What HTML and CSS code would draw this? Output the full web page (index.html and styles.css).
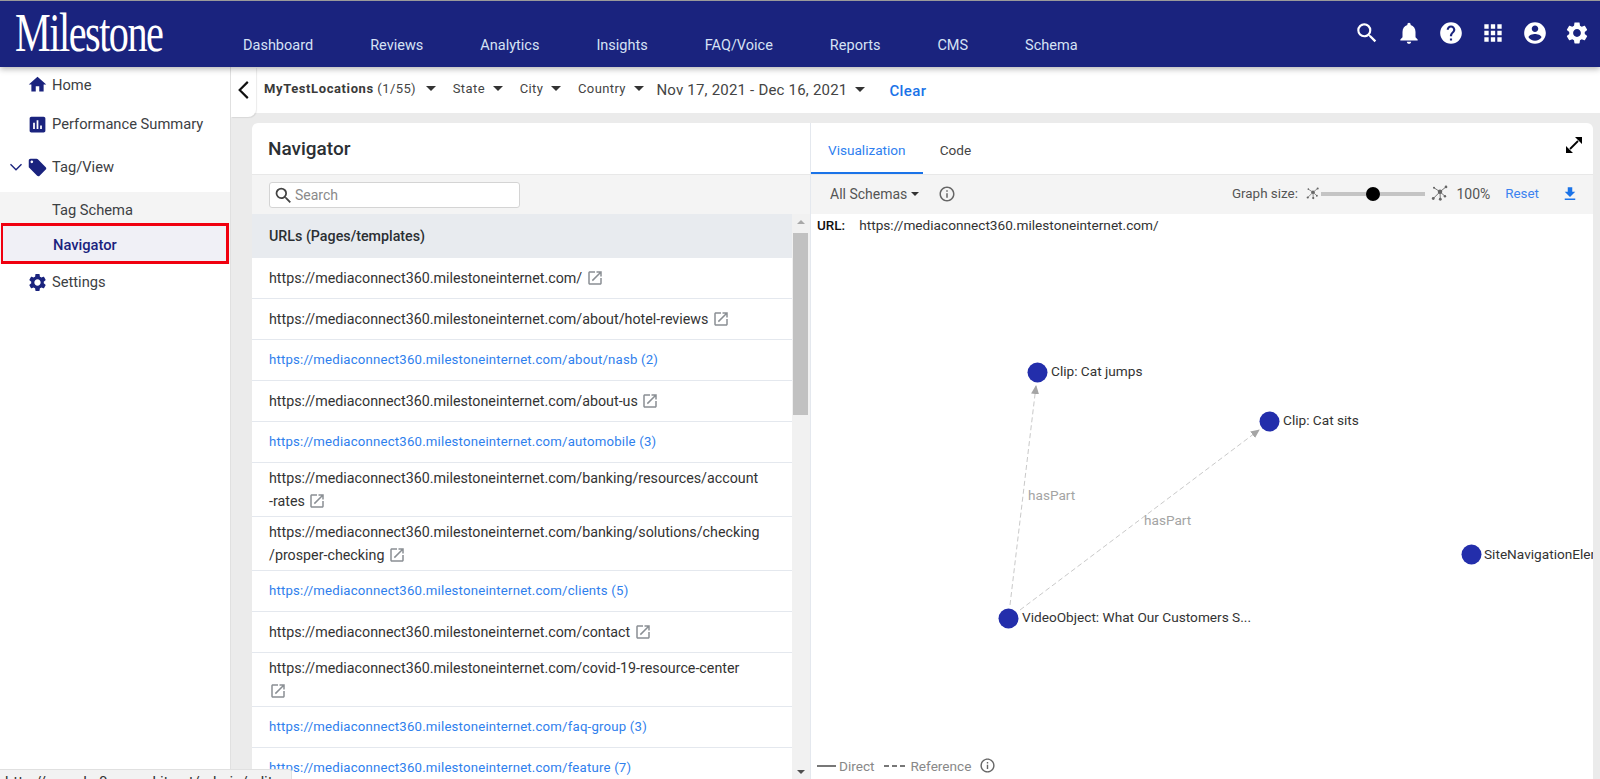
FILE: index.html

```html
<!DOCTYPE html>
<html lang="en">
<head>
  <meta charset="UTF-8">
  <title>Milestone - Navigator</title>
  <meta name="viewport" content="width=device-width, initial-scale=1.0">
  <link rel="stylesheet" href="styles.css">
</head>
<body>

<svg class="sprite" width="0" height="0">
  <symbol id="i-search" viewBox="0 0 24 24"><path d="M15.5 14h-.79l-.28-.27A6.471 6.471 0 0 0 16 9.5 6.5 6.5 0 1 0 9.5 16c1.61 0 3.09-.59 4.23-1.57l.27.28v.79l5 4.99L20.49 19l-4.99-5zm-6 0C7.01 14 5 11.99 5 9.5S7.01 5 9.5 5 14 7.01 14 9.5 11.99 14 9.5 14z"/></symbol>
  <symbol id="i-bell" viewBox="0 0 24 24"><path d="M12 22c1.1 0 2-.9 2-2h-4c0 1.1.9 2 2 2zm6-6v-5c0-3.07-1.63-5.64-4.5-6.32V4c0-.83-.67-1.5-1.5-1.5s-1.5.67-1.5 1.5v.68C7.64 5.36 6 7.92 6 11v5l-2 2v1h16v-1l-2-2z"/></symbol>
  <symbol id="i-help" viewBox="0 0 24 24"><path d="M12 2C6.48 2 2 6.48 2 12s4.48 10 10 10 10-4.48 10-10S17.52 2 12 2zm1 17h-2v-2h2v2zm2.07-7.75l-.9.92C13.45 12.9 13 13.5 13 15h-2v-.5c0-1.1.45-2.1 1.17-2.83l1.24-1.26c.37-.36.59-.86.59-1.41 0-1.1-.9-2-2-2s-2 .9-2 2H8c0-2.21 1.79-4 4-4s4 1.79 4 4c0 .88-.36 1.68-.93 2.25z"/></symbol>
  <symbol id="i-apps" viewBox="0 0 24 24"><path d="M4 8h4V4H4v4zm6 12h4v-4h-4v4zm-6 0h4v-4H4v4zm0-6h4v-4H4v4zm6 0h4v-4h-4v4zm6-10v4h4V4h-4zm-6 4h4V4h-4v4zm6 6h4v-4h-4v4zm0 6h4v-4h-4v4z"/></symbol>
  <symbol id="i-account" viewBox="0 0 24 24"><path d="M12 2C6.48 2 2 6.48 2 12s4.48 10 10 10 10-4.48 10-10S17.52 2 12 2zm0 3c1.66 0 3 1.34 3 3s-1.34 3-3 3-3-1.34-3-3 1.34-3 3-3zm0 14.2c-2.5 0-4.71-1.28-6-3.22.03-1.99 4-3.08 6-3.08 1.99 0 5.97 1.09 6 3.08-1.29 1.94-3.5 3.22-6 3.22z"/></symbol>
  <symbol id="i-gear" viewBox="0 0 24 24"><path d="M19.14 12.94c.04-.3.06-.61.06-.94 0-.32-.02-.64-.07-.94l2.03-1.58c.18-.14.23-.41.12-.61l-1.92-3.32c-.12-.22-.37-.29-.59-.22l-2.39.96c-.5-.38-1.03-.7-1.62-.94l-.36-2.54c-.04-.24-.24-.41-.48-.41h-3.84c-.24 0-.43.17-.47.41l-.36 2.54c-.59.24-1.13.57-1.62.94l-2.39-.96c-.22-.08-.47 0-.59.22L2.74 8.87c-.12.21-.08.47.12.61l2.03 1.58c-.05.3-.09.63-.09.94s.02.64.07.94l-2.03 1.58c-.18.14-.23.41-.12.61l1.92 3.32c.12.22.37.29.59.22l2.39-.96c.5.38 1.03.7 1.62.94l.36 2.54c.05.24.24.41.48.41h3.84c.24 0 .44-.17.47-.41l.36-2.54c.59-.24 1.13-.56 1.62-.94l2.39.96c.22.08.47 0 .59-.22l1.92-3.32c.12-.22.07-.47-.12-.61l-2.01-1.58zM12 15.6c-1.98 0-3.6-1.62-3.6-3.6s1.62-3.6 3.6-3.6 3.6 1.62 3.6 3.6-1.62 3.6-3.6 3.6z"/></symbol>
  <symbol id="i-home" viewBox="0 0 24 24"><path d="M10 20v-6h4v6h5v-8h3L12 3 2 12h3v8z"/></symbol>
  <symbol id="i-chart" viewBox="0 0 24 24"><path d="M19 3H5c-1.1 0-2 .9-2 2v14c0 1.1.9 2 2 2h14c1.1 0 2-.9 2-2V5c0-1.1-.9-2-2-2zM9 17H7v-7h2v7zm4 0h-2V7h2v10zm4 0h-2v-4h2v4z"/></symbol>
  <symbol id="i-tag" viewBox="0 0 24 24"><path d="M21.41 11.58l-9-9C12.05 2.22 11.55 2 11 2H4c-1.1 0-2 .9-2 2v7c0 .55.22 1.05.59 1.42l9 9c.36.36.86.58 1.41.58.55 0 1.05-.22 1.41-.59l7-7c.37-.36.59-.86.59-1.41 0-.55-.23-1.06-.59-1.42zM5.5 7C4.67 7 4 6.33 4 5.5S4.67 4 5.5 4 7 4.67 7 5.5 6.33 7 5.5 7z"/></symbol>
  <symbol id="i-open" viewBox="0 0 24 24"><path d="M19 19H5V5h7V3H5c-1.11 0-2 .9-2 2v14c0 1.1.89 2 2 2h14c1.1 0 2-.9 2-2v-7h-2v7zM14 3v2h3.59l-9.83 9.83 1.41 1.41L19 6.41V10h2V3h-7z"/></symbol>
  <symbol id="i-info" viewBox="0 0 24 24"><path d="M11 7h2v2h-2zm0 4h2v6h-2zm1-9C6.48 2 2 6.48 2 12s4.48 10 10 10 10-4.48 10-10S17.52 2 12 2zm0 18c-4.41 0-8-3.59-8-8s3.59-8 8-8 8 3.59 8 8-3.59 8-8 8z"/></symbol>
  <symbol id="i-download" viewBox="0 0 24 24"><path d="M19 9h-4V3H9v6H5l7 7 7-7zM5 18v2h14v-2H5z"/></symbol>
  <symbol id="i-back" viewBox="0 0 24 24"><path d="M15.5 4.5L8 12l7.5 7.5" fill="none" stroke="currentColor" stroke-width="2"/></symbol>
  <symbol id="i-down" viewBox="0 0 24 24"><path d="M6 9l6 6 6-6" fill="none" stroke="currentColor" stroke-width="1.5"/></symbol>
  <symbol id="i-expand" viewBox="0 0 16 16"><path d="M9 0h7v7zM0 16V9l7 7z"/><path d="M4 12l8-8" fill="none" stroke="currentColor" stroke-width="1.8"/></symbol>
  <symbol id="i-graph" viewBox="0 0 24 24"><path d="M12 9L20 2.5M12 9L4 3.7M12 9L3 18M12 9L12.4 19M12 9L18.6 15" fill="none" stroke="currentColor" stroke-width="1.2"/><circle cx="12" cy="9" r="3"/><circle cx="20" cy="2.5" r="1.8"/><circle cx="4" cy="3.7" r="1.4"/><circle cx="3" cy="18" r="1.9"/><circle cx="12.4" cy="19" r="1.9"/><circle cx="18.6" cy="15" r="1.6"/></symbol>
</svg>

<header class="topbar">
  <div class="logo">Milestone</div>
  <nav class="mainnav">
    <a>Dashboard</a>
    <a>Reviews</a>
    <a>Analytics</a>
    <a>Insights</a>
    <a>FAQ/Voice</a>
    <a>Reports</a>
    <a>CMS</a>
    <a>Schema</a>
  </nav>
  <div class="topicons">
    <svg class="ico"><use href="#i-search"/></svg>
    <svg class="ico"><use href="#i-bell"/></svg>
    <svg class="ico"><use href="#i-help"/></svg>
    <svg class="ico"><use href="#i-apps"/></svg>
    <svg class="ico"><use href="#i-account"/></svg>
    <svg class="ico"><use href="#i-gear"/></svg>
  </div>
</header>

<div class="layout">
  <aside class="sidebar">
    <a class="side-item item-home"><svg class="ico-side"><use href="#i-home"/></svg>Home</a>
    <a class="side-item item-perf"><svg class="ico-side"><use href="#i-chart"/></svg>Performance Summary</a>
    <a class="side-item item-tag">
      <svg class="ico-caret"><use href="#i-down"/></svg>
      <svg class="ico-side"><use href="#i-tag"/></svg>Tag/View
    </a>
    <div class="submenu">
      <a class="sub-item">Tag Schema</a>
      <a class="sub-item active">Navigator</a>
    </div>
    <a class="side-item item-settings"><svg class="ico-side"><use href="#i-gear"/></svg>Settings</a>
  </aside>

  <main class="content">
    <div class="filterbar">
      <button class="backbtn"><svg class="ico-back"><use href="#i-back"/></svg></button>
      <span class="filter"><b>MyTestLocations</b> (1/55)<i class="caret"></i></span>
      <span class="filter">State<i class="caret"></i></span>
      <span class="filter">City<i class="caret"></i></span>
      <span class="filter last">Country<i class="caret"></i></span>
      <span class="filter date">Nov 17, 2021 - Dec 16, 2021<i class="caret"></i></span>
      <a class="clear">Clear</a>
    </div>

    <div class="panel">
      <section class="leftpane">
        <h2 class="pane-title">Navigator</h2>
        <div class="searchrow">
          <div class="searchbox">
            <svg class="ico-search"><use href="#i-search"/></svg>
            <span>Search</span>
          </div>
        </div>
        <div class="listwrap">
          <div class="urllist">
            <div class="list-head">URLs (Pages/templates)</div>
            <div class="row">https://mediaconnect360.milestoneinternet.com/ <svg class="ico-open"><use href="#i-open"/></svg></div>
            <div class="row">https://mediaconnect360.milestoneinternet.com/about/hotel-reviews <svg class="ico-open"><use href="#i-open"/></svg></div>
            <div class="row link">https://mediaconnect360.milestoneinternet.com/about/nasb (2)</div>
            <div class="row">https://mediaconnect360.milestoneinternet.com/about-us <svg class="ico-open"><use href="#i-open"/></svg></div>
            <div class="row link">https://mediaconnect360.milestoneinternet.com/automobile (3)</div>
            <div class="row tall">https://mediaconnect360.milestoneinternet.com/banking/resources/account<br>-rates <svg class="ico-open"><use href="#i-open"/></svg></div>
            <div class="row tall">https://mediaconnect360.milestoneinternet.com/banking/solutions/checking<br>/prosper-checking <svg class="ico-open"><use href="#i-open"/></svg></div>
            <div class="row link">https://mediaconnect360.milestoneinternet.com/clients (5)</div>
            <div class="row">https://mediaconnect360.milestoneinternet.com/contact <svg class="ico-open"><use href="#i-open"/></svg></div>
            <div class="row tall">https://mediaconnect360.milestoneinternet.com/covid-19-resource-center<br><svg class="ico-open"><use href="#i-open"/></svg></div>
            <div class="row link">https://mediaconnect360.milestoneinternet.com/faq-group (3)</div>
            <div class="row link">https://mediaconnect360.milestoneinternet.com/feature (7)</div>
          </div>
          <div class="scrollbar">
            <i class="arrow-up"></i>
            <div class="thumb"></div>
            <i class="arrow-down"></i>
          </div>
        </div>
      </section>

      <section class="rightpane">
        <div class="tabs">
          <a class="tab active">Visualization</a>
          <a class="tab">Code</a>
          <svg class="ico-expand"><use href="#i-expand"/></svg>
        </div>
        <div class="graphbar">
          <span class="schemas">All Schemas<i class="caret small"></i></span>
          <svg class="ico-info"><use href="#i-info"/></svg>
          <div class="graphsize">
            <span>Graph size:</span>
            <svg class="ico-graph small"><use href="#i-graph"/></svg>
            <div class="slider"><i class="knob"></i></div>
            <svg class="ico-graph"><use href="#i-graph"/></svg>
            <span class="pct">100%</span>
            <a class="reset">Reset</a>
            <svg class="ico-dl"><use href="#i-download"/></svg>
          </div>
        </div>
        <div class="urlline"><b>URL:</b><span>https://mediaconnect360.milestoneinternet.com/</span></div>
        <div class="canvas">
          <svg class="graph" width="798" height="560" viewBox="811 234 798 560">
            <defs>
              <marker id="head" markerWidth="9" markerHeight="8" refX="8" refY="4" orient="auto" markerUnits="userSpaceOnUse">
                <path d="M0 0L9 4L0 8z" fill="#a5a5a5"/>
              </marker>
            </defs>
            <line class="edge" x1="1010" y1="605" x2="1036" y2="386" marker-end="url(#head)"/>
            <line class="edge" x1="1020" y1="610" x2="1259" y2="430" marker-end="url(#head)"/>
            <text class="edge-label" x="1028" y="500">hasPart</text>
            <text class="edge-label" x="1144" y="525">hasPart</text>
            <circle class="node" cx="1037.5" cy="372.5" r="10"/>
            <circle class="node" cx="1269.5" cy="421.5" r="10"/>
            <circle class="node" cx="1008.5" cy="618.5" r="10"/>
            <circle class="node" cx="1471.5" cy="554.5" r="10"/>
            <text class="node-label" x="1051" y="376">Clip: Cat jumps</text>
            <text class="node-label" x="1283" y="425">Clip: Cat sits</text>
            <text class="node-label" x="1022" y="622">VideoObject: What Our Customers S...</text>
            <text class="node-label" x="1484" y="559">SiteNavigationElement</text>
          </svg>
          <div class="legend">
            <i class="solid"></i>Direct
            <i class="dashed"></i>Reference
            <svg class="ico-info"><use href="#i-info"/></svg>
          </div>
        </div>
      </section>
    </div>
  </main>
</div>

<div class="statusbar">http://sample-0.owned.it.net/admin/edit</div>

</body>
</html>
```

FILE: styles.css

```css
* {
  box-sizing: border-box;
}

html, body {
  margin: 0;
  height: 779px;
  overflow: hidden;
}

body {
  font-family: Roboto, 'Liberation Sans', sans-serif;
  color: #333;
  background: #fff;
  display: flex;
  flex-direction: column;
  position: relative;
}

.sprite {
  position: absolute;
}

svg {
  fill: currentColor;
  flex: none;
}

/* top bar */
.topbar {
  height: 67px;
  flex: none;
  background: #1a237e;
  border-top: 1px solid #9a9a9a;
  display: flex;
  box-shadow: 0 2px 6px rgba(0, 0, 0, 0.3);
  position: relative;
  z-index: 3;
}

.logo {
  width: 243px;
  padding: 4px 0 0 15px;
  font-family: 'Liberation Serif', serif;
  font-size: 55px;
  line-height: 56px;
  letter-spacing: -2px;
  color: #fff;
  white-space: nowrap;
  transform: scaleX(0.73);
  transform-origin: 15px 0;
}

.mainnav {
  display: flex;
  gap: 57px;
  padding-top: 36px;
  font-size: 14.5px;
  line-height: 18px;
  color: #d6e2f5;
}

.topicons {
  margin-left: auto;
  display: flex;
  gap: 16px;
  padding: 19px 10px 0 0;
  color: #fff;
}

.ico {
  width: 26px;
  height: 26px;
}

/* layout */
.layout {
  flex: 1;
  display: flex;
  min-height: 0;
}

.sidebar {
  width: 231px;
  flex: none;
  background: #fff;
  border-right: 1px solid #e0e0e0;
  font-size: 14.7px;
  color: #3c4043;
}

.side-item {
  display: flex;
  align-items: center;
  padding-left: 27px;
  gap: 4px;
}

.item-home {
  height: 35px;
}

.item-perf {
  height: 44px;
}

.item-tag {
  height: 46px;
  padding: 0 0 4px 5px;
}

.item-settings {
  height: 36px;
}

.ico-side {
  width: 21px;
  height: 21px;
  color: #1a237e;
}

.ico-caret {
  width: 22px;
  height: 22px;
  color: #1a237e;
  margin-right: -4px;
}

.submenu {
  background: #f4f4f4;
}

.sub-item {
  display: block;
  height: 31px;
  line-height: 37px;
  padding-left: 52px;
}

.sub-item.active {
  height: 41px;
  line-height: 38px;
  margin: 0 1px;
  padding-left: 50px;
  background: #f0f0f6;
  border: 3px solid #f0000f;
  border-left-width: 2px;
  color: #1a237e;
  font-weight: 500;
}

/* filter bar */
.content {
  flex: 1;
  min-width: 0;
  background: #ebebeb;
  display: flex;
  flex-direction: column;
}

.filterbar {
  height: 46px;
  flex: none;
  padding-bottom: 3px;
  background: #fff;
  display: flex;
  align-items: center;
  font-size: 13px;
  letter-spacing: 0.4px;
  color: #444;
  position: relative;
}

.backbtn {
  position: absolute;
  left: 0;
  top: 0;
  width: 25px;
  height: 50px;
  padding: 0 0 4px;
  border: none;
  background: #fff;
  border-radius: 0 0 8px 0;
  box-shadow: 1px 1px 1px rgba(0, 0, 0, 0.08);
  color: #111;
}

.ico-back {
  width: 26px;
  height: 26px;
  display: block;
}

.filter {
  display: flex;
  align-items: center;
  white-space: pre;
  margin-right: 16.7px;
}

.filter.last {
  margin-right: 12.5px;
}

.filterbar .filter:first-of-type {
  margin-left: 33px;
}

.filter b {
  font-weight: 700;
  letter-spacing: 0.6px;
  color: #3a3a3a;
}

.caret {
  display: inline-block;
  width: 0;
  height: 0;
  margin-left: 8px;
  border-left: 5.5px solid transparent;
  border-right: 5.5px solid transparent;
  border-top: 5px solid #333;
}

.filterbar .filter:first-of-type .caret {
  margin-left: 10px;
}

.filter.date {
  margin: 2px 0 0;
  font-size: 15px;
  letter-spacing: 0.2px;
}

.caret.small {
  margin-left: 4px;
  border-width: 4.5px 4.5px 0;
}

.clear {
  margin: 4px 0 0 24px;
  font-size: 15px;
  font-weight: 500;
  color: #1a73e8;
}

/* main panel */
.panel {
  flex: 1;
  min-height: 0;
  margin: 10px 7px 0 21px;
  background: #fff;
  border-radius: 6px 6px 0 0;
  display: flex;
  overflow: hidden;
}

.leftpane {
  width: 559px;
  flex: none;
  display: flex;
  flex-direction: column;
  border-right: 1px solid #e4e8ee;
}

.pane-title {
  height: 51px;
  margin: 0;
  padding-left: 16px;
  font-size: 19px;
  font-weight: 500;
  line-height: 52px;
  color: #2b2f33;
}

.searchrow {
  height: 40px;
  flex: none;
  background: #f4f4f4;
  border-top: 1px solid #e8e8e8;
  padding: 7px 0 0 17px;
}

.searchbox {
  width: 251px;
  height: 26px;
  background: #fff;
  border: 1px solid #d4d4d4;
  border-radius: 3px;
  display: flex;
  align-items: center;
  gap: 1px;
  padding-left: 3px;
  font-size: 14px;
  color: #8a8a8a;
}

.ico-search {
  width: 21px;
  height: 21px;
  color: #444;
}

.listwrap {
  flex: 1;
  min-height: 0;
  display: flex;
}

.urllist {
  flex: 1;
  min-width: 0;
  overflow: hidden;
  font-size: 14.27px;
  color: #333;
}

.list-head {
  height: 44px;
  padding-left: 17px;
  background: #e8ebef;
  line-height: 44px;
  font-weight: 500;
  color: #2b2f33;
}

.row {
  height: 41px;
  padding: 11px 0 0 17px;
  line-height: 17px;
  border-bottom: 1px solid #e4e8ee;
  white-space: nowrap;
}

.row.tall {
  height: 54px;
  padding-top: 4px;
  line-height: 23px;
}

.row.link {
  color: #2f80ed;
  font-size: 13.2px;
  letter-spacing: 0.2px;
}

.ico-open {
  width: 18px;
  height: 18px;
  color: #8a8f94;
  vertical-align: -4px;
}

.scrollbar {
  width: 18px;
  flex: none;
  background: #f1f1f1;
  display: flex;
  flex-direction: column;
  align-items: center;
}

.arrow-up {
  margin-top: 6px;
  width: 0;
  height: 0;
  border-left: 4px solid transparent;
  border-right: 4px solid transparent;
  border-bottom: 4px solid #a8a8a8;
}

.thumb {
  width: 15px;
  height: 182px;
  margin: 9px 2px 0 0;
  background: #c1c1c1;
}

.arrow-down {
  margin-top: auto;
  margin-bottom: 5px;
  width: 0;
  height: 0;
  border-left: 4px solid transparent;
  border-right: 4px solid transparent;
  border-top: 4px solid #505050;
}

/* right pane */
.rightpane {
  flex: 1;
  min-width: 0;
  display: flex;
  flex-direction: column;
}

.tabs {
  height: 51px;
  flex: none;
  display: flex;
  position: relative;
  font-size: 13.6px;
}

.tab {
  height: 51px;
  padding: 0 17px;
  line-height: 54px;
  color: #444;
}

.tab.active {
  color: #2f7ff0;
  border-bottom: 2px solid #1a73e8;
}

.ico-expand {
  position: absolute;
  right: 11px;
  top: 14px;
  width: 16px;
  height: 16px;
  color: #000;
}

.graphbar {
  height: 40px;
  flex: none;
  background: #f4f4f4;
  border-top: 1px solid #e8e8e8;
  display: flex;
  align-items: center;
  font-size: 13.4px;
  color: #555;
  padding: 0 0 2px 19px;
}

.schemas {
  display: flex;
  align-items: center;
  font-size: 14px;
}

.ico-info {
  width: 18px;
  height: 18px;
  color: #666;
  margin-left: 19px;
}

.graphsize {
  margin-left: auto;
  display: flex;
  align-items: center;
  padding-right: 14px;
}

.ico-graph {
  width: 18px;
  height: 18px;
  color: #666;
  margin-left: 6px;
}

.ico-graph.small {
  width: 14px;
  height: 14px;
  margin: 0 1.5px 0 8px;
}

.slider {
  width: 104px;
  height: 4px;
  background: #c4c4c4;
  position: relative;
}

.knob {
  position: absolute;
  left: 45px;
  top: -5px;
  width: 14px;
  height: 14px;
  border-radius: 50%;
  background: #000;
}

.pct {
  margin-left: 7px;
  font-size: 14px;
}

.reset {
  margin-left: 15px;
  color: #3b82f0;
}

.ico-dl {
  width: 18px;
  height: 18px;
  margin-left: 22px;
  color: #1a73e8;
}

.urlline {
  height: 20px;
  flex: none;
  display: flex;
  gap: 14px;
  padding: 3px 0 0 6px;
  font-size: 13.65px;
  line-height: 16px;
  color: #333;
}

.urlline b {
  font-size: 13.5px;
  font-weight: 500;
  color: #111;
}

.canvas {
  flex: 1;
  min-height: 0;
  position: relative;
}

.graph {
  position: absolute;
  left: 0;
  top: 0;
}

.edge {
  stroke: #c9c9c9;
  stroke-width: 1;
  stroke-dasharray: 5 3;
}

.node {
  fill: #232eab;
}

.node-label {
  font-size: 13.65px;
  fill: #333;
}

.edge-label {
  font-size: 13.6px;
  fill: #a4a4a4;
}

.legend {
  position: absolute;
  left: 6px;
  bottom: 5px;
  display: flex;
  align-items: center;
  font-size: 13.6px;
  color: #888;
}

.solid,
.dashed {
  width: 19px;
  height: 2px;
  margin-right: 3px;
  background: #777;
}

.dashed {
  width: 21px;
  margin: 0 5px 0 10px;
  background: repeating-linear-gradient(90deg, #777 0 5px, transparent 5px 8px);
}

.legend .ico-info {
  width: 17px;
  height: 17px;
  margin-left: 8px;
}

.statusbar {
  position: absolute;
  left: 0;
  bottom: 0;
  width: 292px;
  height: 10px;
  padding: 4px 0 0 5px;
  background: #f2f2f2;
  border: 1px solid #e0e0e0;
  border-width: 1px 1px 0 0;
  border-radius: 0 3px 0 0;
  font-size: 15px;
  line-height: 16px;
  color: #333;
  overflow: hidden;
  z-index: 4;
}
```
